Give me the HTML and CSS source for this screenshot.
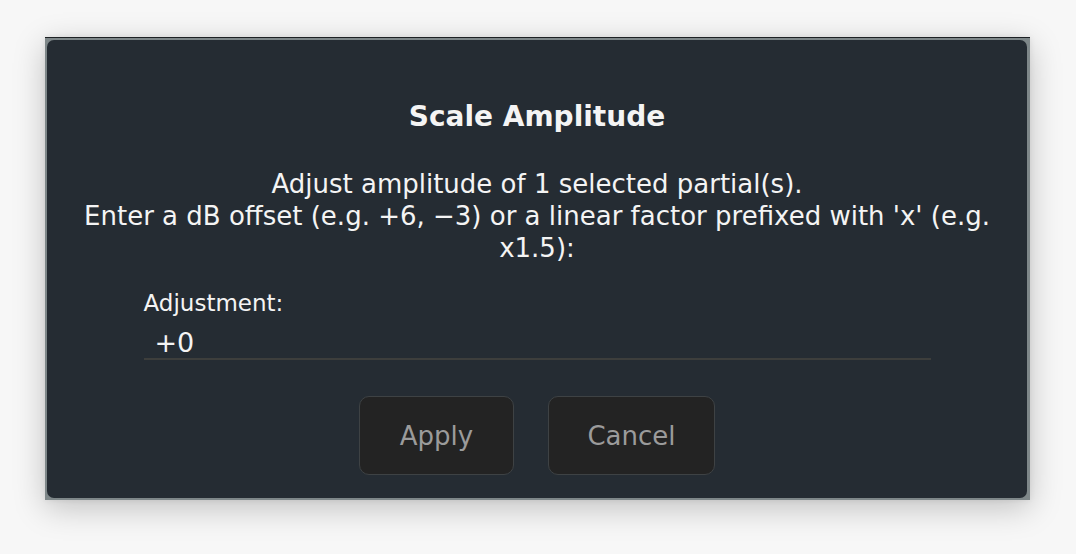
FILE: index.html
```html
<!DOCTYPE html>
<html lang="en">

<head>
    <meta charset="UTF-8">
    <meta name="viewport" content="width=device-width, initial-scale=1.0">
    <title>Scale Amplitude</title>
    <link rel="stylesheet" href="styles.css">
</head>

<body>
    <div class="dialog-frame">
        <div class="dialog">
            <h1 class="dialog-title">Scale Amplitude</h1>
            <p class="dialog-message">Adjust amplitude of 1 selected partial(s).<br>Enter a dB offset (e.g. +6, −3) or a linear factor prefixed with 'x' (e.g. x1.5):</p>

            <div class="field">
                <label for="adjustment">Adjustment:</label>
                <input type="text" id="adjustment" value="+0">
            </div>

            <div class="buttons">
                <button class="btn btn-apply">Apply</button>
                <button class="btn btn-cancel">Cancel</button>
            </div>
        </div>
    </div>
</body>

</html>
```

FILE: styles.css
```css
body {
    margin: 0;
    padding: 37px 0 0 45px;
    background-color: #f7f7f7;
    font-family: 'DejaVu Sans', Verdana, sans-serif;
    height: 554px;
    box-sizing: border-box;
    overflow: hidden;
}

.dialog-frame {
    width: 985px;
    height: 463px;
    box-sizing: border-box;
    padding: 2px 3px 2px 2px;
    background: #7e8789; /* Gray bezel */
    border-top: 1px solid #1d2124;
    box-shadow: 0 8px 30px rgba(0, 0, 0, 0.22), 0 0 6px rgba(0, 0, 0, 0.08);
}

.dialog {
    height: 100%;
    background-color: #252c33; /* Dark slate */
    border-radius: 7px;
    color: #f4f4f4;
    text-align: center;
    display: flex;
    flex-direction: column;
    align-items: center;
}

.dialog-title {
    font-size: 28px;
    font-weight: bold;
    margin: 60px 0 0;
    line-height: 34px;
}

.dialog-message {
    font-size: 26px;
    line-height: 32px;
    margin: 34px 0 0;
    width: 960px;
}

.field {
    width: 787px;
    margin-top: 25px;
    text-align: left;
}

.field label {
    display: block;
    font-size: 23px;
    line-height: 28px;
}

.field input {
    display: block;
    width: 100%;
    box-sizing: border-box;
    margin-top: 9px;
    padding: 0 11px;
    height: 34px;
    background: transparent;
    border: none;
    border-bottom: 2px solid #3d3e3c;
    color: #f4f4f4;
    font-family: inherit;
    font-size: 27px;
    outline: none;
}

.buttons {
    display: flex;
    gap: 34px;
    margin-top: 36px;
}

.btn {
    height: 79px;
    background-color: #232323;
    border: 1px solid #3e4244;
    border-radius: 10px;
    color: #9b9b9b;
    font-family: inherit;
    font-size: 26px;
}

.btn-apply {
    width: 155px;
}

.btn-cancel {
    width: 167px;
}
```
